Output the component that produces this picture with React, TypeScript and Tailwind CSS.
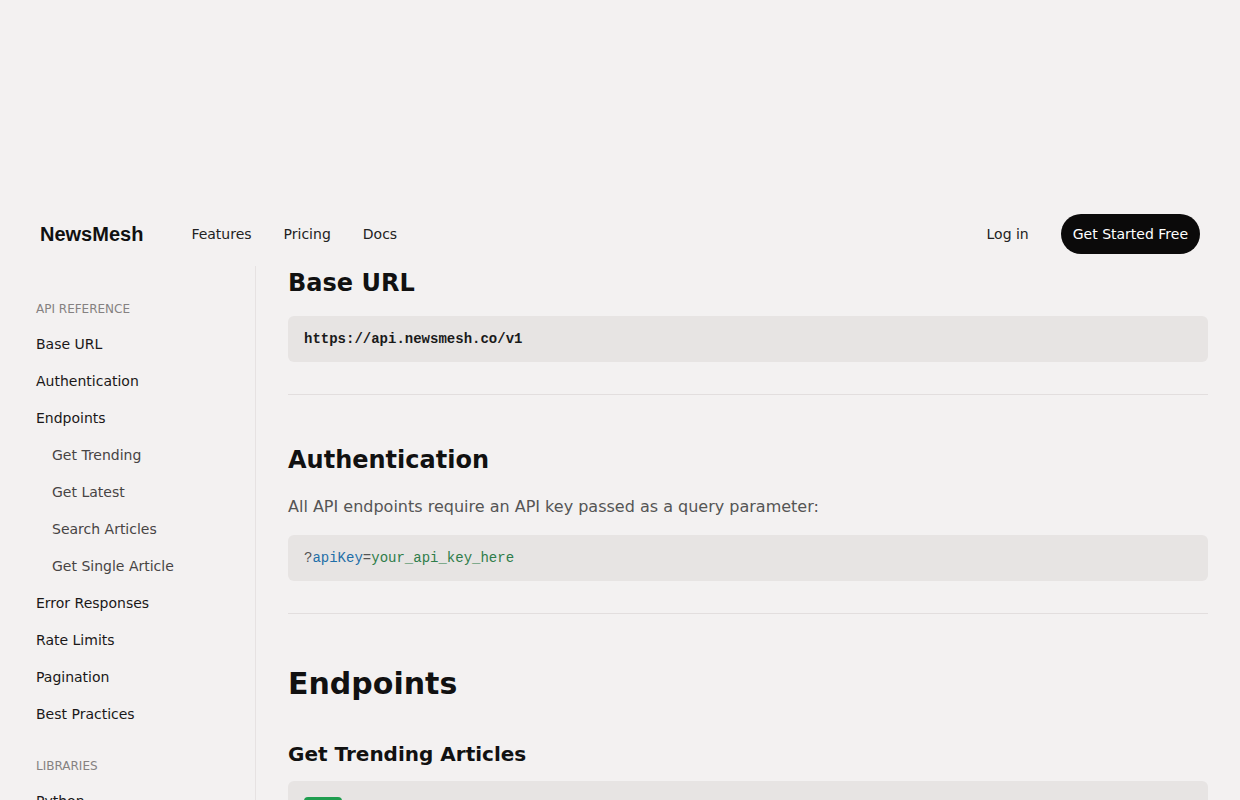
import React from "react";

type NavItem = { label: string; sub?: boolean };

const apiReference: NavItem[] = [
  { label: "Base URL" },
  { label: "Authentication" },
  { label: "Endpoints" },
  { label: "Get Trending", sub: true },
  { label: "Get Latest", sub: true },
  { label: "Search Articles", sub: true },
  { label: "Get Single Article", sub: true },
  { label: "Error Responses" },
  { label: "Rate Limits" },
  { label: "Pagination" },
  { label: "Best Practices" },
];

const libraries: NavItem[] = [{ label: "Python" }, { label: "JavaScript" }, { label: "Go" }];

const sans = "font-['DejaVu_Sans',sans-serif]";
const mono = "font-['Liberation_Mono',monospace]";

function SidebarGroup({ title, items, first }: { title: string; items: NavItem[]; first?: boolean }) {
  return (
    <div className={first ? "mt-[35px]" : "mt-[26px]"}>
      <div className="text-xs leading-4 uppercase text-[#858181] mb-2">{title}</div>
      <ul>
        {items.map((item) => (
          <li
            key={item.label}
            className={
              item.sub
                ? "h-[37px] flex items-center pl-4 text-sm text-[#474444]"
                : "h-[37px] flex items-center text-sm text-[#1a1818]"
            }
          >
            {item.label}
          </li>
        ))}
      </ul>
    </div>
  );
}

function Header() {
  return (
    <header className="h-16 px-10 flex items-center justify-between">
      <div className="flex items-center">
        <span className="font-['Liberation_Sans',Arial,sans-serif] font-bold text-xl text-[#111]">
          NewsMesh
        </span>
        <nav className="ml-12 flex items-center gap-8 text-sm text-[#222]">
          <span>Features</span>
          <span>Pricing</span>
          <span>Docs</span>
        </nav>
      </div>
      <div className="flex items-center gap-8">
        <span className="text-sm text-[#222]">Log in</span>
        <button className="h-10 px-3 rounded-full bg-[#0b0a0a] text-white text-sm">
          Get Started Free
        </button>
      </div>
    </header>
  );
}

function CodeBlock({ children }: { children: React.ReactNode }) {
  return (
    <div className={`${mono} bg-[#e7e4e3] rounded-md px-4 py-3 text-sm leading-[22px]`}>
      {children}
    </div>
  );
}

export default function App() {
  return (
    <div className={`${sans} bg-[#f3f1f1] min-h-screen`}>
      <div className="h-[202px]" />
      <Header />
      <div className="flex">
        <aside className="w-[256px] shrink-0 border-r border-[#e6e2e2] pl-9">
          <SidebarGroup title="API Reference" items={apiReference} first />
          <SidebarGroup title="Libraries" items={libraries} />
        </aside>

        <main className="flex-1 px-8">
          <section className="pb-8 border-b border-[#e2dede]">
            <h2 className="text-2xl leading-8 font-bold text-[#111] mt-px mb-[17px]">Base URL</h2>
            <CodeBlock>
              <span className="font-bold text-[#1a1a1a]">https://api.newsmesh.co/v1</span>
            </CodeBlock>
          </section>

          <section className="pt-[49px] pb-8 border-b border-[#e2dede]">
            <h2 className="text-2xl leading-8 font-bold text-[#111] mb-[18px]">Authentication</h2>
            <p className="text-base leading-[25px] text-[#555] mb-4">
              All API endpoints require an API key passed as a query parameter:
            </p>
            <CodeBlock>
              <span className="text-[#555]">?</span>
              <span className="text-[#1f6fa8]">apiKey</span>
              <span className="text-[#555]">=</span>
              <span className="text-[#2f7d4a]">your_api_key_here</span>
            </CodeBlock>
          </section>

          <section className="pt-[52px]">
            <h1 className="text-3xl leading-9 font-bold text-[#111]">Endpoints</h1>
            <h3 className="mt-[38px] text-xl leading-7 font-bold text-[#111] mb-[13px]">
              Get Trending Articles
            </h3>
            <div className="bg-[#e7e4e3] rounded-md p-4 flex items-center gap-3">
              <span className={`${mono} bg-[#1f9d4f] text-white text-xs font-bold rounded px-2 py-1`}>
                GET
              </span>
              <span className={`${mono} text-sm text-[#1a1a1a]`}>/articles/trending</span>
            </div>
          </section>
        </main>
      </div>
    </div>
  );
}
